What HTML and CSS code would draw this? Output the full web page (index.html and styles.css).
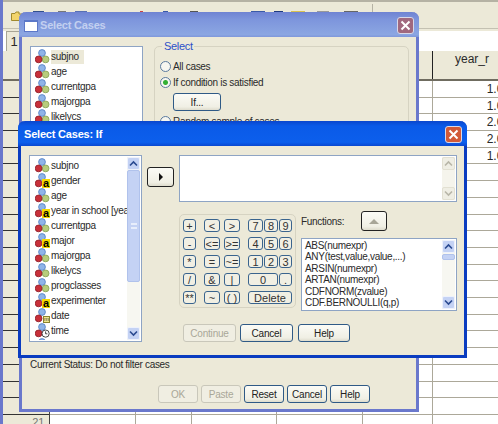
FILE: index.html
```html
<!DOCTYPE html>
<html>
<head>
<meta charset="UTF-8">
<title>Select Cases</title>
<link rel="stylesheet" href="styles.css">
</head>
<body>

<svg class="defs" width="0" height="0">
	<symbol id="v-base" viewBox="0 0 15 15">
		<circle cx="7" cy="4" r="3.4" fill="#8fb4e8" stroke="#4f7fc4" stroke-width="0.8"/>
	</symbol>
	<symbol id="v-num" viewBox="0 0 15 15">
		<circle cx="7" cy="4" r="3.4" fill="#8fb4e8" stroke="#4f7fc4" stroke-width="0.8"/>
		<circle cx="10.6" cy="10.4" r="3.4" fill="#b7cc7c" stroke="#84a050" stroke-width="0.8"/>
		<circle cx="3.6" cy="10.4" r="3.4" fill="#c8303a" stroke="#8c1c26" stroke-width="0.8"/>
	</symbol>
	<symbol id="v-two" viewBox="0 0 15 15">
		<circle cx="7" cy="4" r="3.4" fill="#8fb4e8" stroke="#4f7fc4" stroke-width="0.8"/>
		<circle cx="3.6" cy="10.4" r="3.4" fill="#c8303a" stroke="#8c1c26" stroke-width="0.8"/>
	</symbol>
	<symbol id="v-time" viewBox="0 0 15 15">
		<circle cx="7" cy="4" r="3.4" fill="#8fb4e8" stroke="#4f7fc4" stroke-width="0.8"/>
		<circle cx="3.6" cy="10.4" r="3.4" fill="#c8303a" stroke="#8c1c26" stroke-width="0.8"/>
		<circle cx="10.6" cy="10.6" r="3.6" fill="#fff" stroke="#333" stroke-width="0.9"/>
		<path d="M10.6 8.4V10.8H12.4" fill="none" stroke="#333" stroke-width="0.9"/>
	</symbol>
	<symbol id="chev-up" viewBox="0 0 9 7">
		<path d="M1 5.5L4.5 2L8 5.5" fill="none" stroke="currentColor" stroke-width="1.6"/>
	</symbol>
	<symbol id="chev-down" viewBox="0 0 9 7">
		<path d="M1 1.5L4.5 5L8 1.5" fill="none" stroke="currentColor" stroke-width="1.6"/>
	</symbol>
	<symbol id="close-x" viewBox="0 0 11 11">
		<path d="M1.5 1.5L9.5 9.5M9.5 1.5L1.5 9.5" fill="none" stroke="#fff" stroke-width="2"/>
	</symbol>
</svg>

<!-- data editor behind the dialogs -->
<div class="editor">
	<div class="toolbar">
		<svg class="folder" width="12" height="10" viewBox="0 0 12 10"><path d="M0.5 2.5H4L5 1H8V3H11.5L9.5 9.5H0.5Z" fill="#f2d46c" stroke="#a08a30"/></svg>
		<span class="tool tool-a"></span>
		<span class="tool tool-b"></span>
		<span class="tool tool-c"></span>
		<span class="tool tool-d"></span>
		<span class="tool tool-e"></span>
		<span class="tool tool-f"></span>
		<span class="tool tool-g"></span>
		<span class="tool tool-h"></span>
		<span class="tool tool-i"></span>
		<span class="tool tool-j"></span>
		<span class="tool tool-k"></span>
		<span class="tool-sep"></span>
	</div>
	<div class="refbar"><span class="refbox">1</span></div>
	<div class="headrow">
		<div class="head-blank"></div>
		<div class="head-col">year_r</div>
	</div>
	<div class="sheet">
		<div class="rowhead"><span>21</span></div>
		<div class="col col-a"></div>
		<div class="col col-b"></div>
		<div class="col col-c"></div>
		<div class="col col-d"></div>
		<div class="col col-e"></div>
		<div class="col col-year">
			<div class="val">1.00</div>
			<div class="val">1.00</div>
			<div class="val">2.00</div>
			<div class="val">2.00</div>
			<div class="val">1.00</div>
		</div>
	</div>
</div>

<!-- Select Cases -->
<div class="win win-back">
	<div class="title">
		<span class="title-icon"></span>
		<span class="title-text">Select Cases</span>
		<span class="close"><svg width="11" height="11"><use href="#close-x"/></svg></span>
	</div>
	<div class="client">
		<div class="back-top">
			<div class="list back-list">
				<div class="rows">
					<div class="row"><span class="var"><svg><use href="#v-num"/></svg></span><span class="sel">subjno</span></div>
					<div class="row"><span class="var"><svg><use href="#v-num"/></svg></span><span>age</span></div>
					<div class="row"><span class="var"><svg><use href="#v-num"/></svg></span><span>currentgpa</span></div>
					<div class="row"><span class="var"><svg><use href="#v-num"/></svg></span><span>majorgpa</span></div>
					<div class="row"><span class="var"><svg><use href="#v-num"/></svg></span><span>likelycs</span></div>
				</div>
			</div>
			<div class="group">
				<div class="legend">Select</div>
				<div class="radio-row"><span class="radio"></span>All cases</div>
				<div class="radio-row"><span class="radio on"></span>If condition is satisfied</div>
				<button class="btn btn-if" type="button">If...</button>
				<div class="radio-row"><span class="radio"></span>Random sample of cases</div>
			</div>
		</div>
		<div class="status">Current Status: Do not filter cases</div>
		<div class="back-btns">
			<button class="btn btn-b off" type="button">OK</button>
			<button class="btn btn-b off" type="button">Paste</button>
			<button class="btn btn-b" type="button">Reset</button>
			<button class="btn btn-b" type="button">Cancel</button>
			<button class="btn btn-b" type="button">Help</button>
		</div>
	</div>
</div>

<!-- Select Cases: If -->
<div class="win win-front">
	<div class="title">
		<span class="title-text">Select Cases: If</span>
		<span class="close"><svg width="11" height="11"><use href="#close-x"/></svg></span>
	</div>
	<div class="client if-body">
		<div class="list var-list">
			<div class="rows">
				<div class="row"><span class="var"><svg><use href="#v-num"/></svg></span><span>subjno</span></div>
				<div class="row"><span class="var"><svg><use href="#v-two"/></svg><b class="badge">a</b></span><span>gender</span></div>
				<div class="row"><span class="var"><svg><use href="#v-num"/></svg></span><span>age</span></div>
				<div class="row"><span class="var"><svg><use href="#v-two"/></svg><b class="badge">a</b></span><span>year in school [yea</span></div>
				<div class="row"><span class="var"><svg><use href="#v-num"/></svg></span><span>currentgpa</span></div>
				<div class="row"><span class="var"><svg><use href="#v-two"/></svg><b class="badge">a</b></span><span>major</span></div>
				<div class="row"><span class="var"><svg><use href="#v-num"/></svg></span><span>majorgpa</span></div>
				<div class="row"><span class="var"><svg><use href="#v-num"/></svg></span><span>likelycs</span></div>
				<div class="row"><span class="var"><svg><use href="#v-num"/></svg></span><span>progclasses</span></div>
				<div class="row"><span class="var"><svg><use href="#v-two"/></svg><b class="badge">a</b></span><span>experimenter</span></div>
				<div class="row"><span class="var"><svg><use href="#v-two"/></svg><b class="badge badge-date">m</b></span><span>date</span></div>
				<div class="row"><span class="var"><svg><use href="#v-time"/></svg></span><span>time</span></div>
				<div class="row"><span class="var"><svg><use href="#v-base"/></svg></span></div>
			</div>
			<div class="sb sb-var">
				<span class="sb-btn"><svg width="9" height="7"><use href="#chev-up"/></svg></span>
				<span class="sb-thumb thumb-var"><i></i></span>
				<span class="sb-gap"></span>
				<span class="sb-btn"><svg width="9" height="7"><use href="#chev-down"/></svg></span>
			</div>
		</div>
		<button class="btn btn-arrow" type="button"><span class="tri-right"></span></button>
		<div class="if-right">
			<div class="list expr">
				<div class="rows"></div>
				<div class="sb sb-off">
					<span class="sb-btn"><svg width="9" height="7"><use href="#chev-up"/></svg></span>
					<span class="sb-gap"></span>
					<span class="sb-btn"><svg width="9" height="7"><use href="#chev-down"/></svg></span>
				</div>
			</div>
			<div class="if-mid">
				<div class="keypad">
					<div class="key-row">
						<button class="key k13" type="button">+</button>
						<button class="key k16 ml8" type="button">&lt;</button>
						<button class="key k16 ml4" type="button">&gt;</button>
						<button class="key k15 ml8" type="button">7</button>
						<button class="key k14 ml1" type="button">8</button>
						<button class="key k13 ml1" type="button">9</button>
					</div>
					<div class="key-row">
						<button class="key k13" type="button">-</button>
						<button class="key k16 ml8" type="button">&lt;=</button>
						<button class="key k16 ml4" type="button">&gt;=</button>
						<button class="key k15 ml8" type="button">4</button>
						<button class="key k14 ml1" type="button">5</button>
						<button class="key k13 ml1" type="button">6</button>
					</div>
					<div class="key-row">
						<button class="key k13" type="button">*</button>
						<button class="key k16 ml8" type="button">=</button>
						<button class="key k16 ml4" type="button">~=</button>
						<button class="key k15 ml8" type="button">1</button>
						<button class="key k14 ml1" type="button">2</button>
						<button class="key k13 ml1" type="button">3</button>
					</div>
					<div class="key-row">
						<button class="key k13" type="button">/</button>
						<button class="key k16 ml8" type="button">&amp;</button>
						<button class="key k16 ml4" type="button">|</button>
						<button class="key k30 ml8" type="button">0</button>
						<button class="key k13 ml1" type="button">.</button>
					</div>
					<div class="key-row">
						<button class="key k13" type="button">**</button>
						<button class="key k16 ml8" type="button">~</button>
						<button class="key k16 ml4" type="button">( )</button>
						<button class="key k44 ml8" type="button">Delete</button>
					</div>
				</div>
				<div class="func">
					<div class="func-head">
						<span class="func-label">Functions:</span>
						<button class="btn btn-func" type="button"><span class="tri-up"></span></button>
					</div>
					<div class="list func-list">
						<div class="rows">
							<div class="fn">ABS(numexpr)</div>
							<div class="fn">ANY(test,value,value,...)</div>
							<div class="fn">ARSIN(numexpr)</div>
							<div class="fn">ARTAN(numexpr)</div>
							<div class="fn">CDFNORM(zvalue)</div>
							<div class="fn">CDF.BERNOULLI(q,p)</div>
						</div>
						<div class="sb sb-func">
							<span class="sb-btn"><svg width="9" height="7"><use href="#chev-up"/></svg></span>
							<span class="sb-thumb thumb-func"></span>
							<span class="sb-gap"></span>
							<span class="sb-btn"><svg width="9" height="7"><use href="#chev-down"/></svg></span>
						</div>
					</div>
				</div>
			</div>
			<div class="if-btns">
				<button class="btn btn-c off" type="button">Continue</button>
				<button class="btn btn-c" type="button">Cancel</button>
				<button class="btn btn-c help" type="button">Help</button>
			</div>
		</div>
	</div>
</div>

</body>
</html>
```

FILE: styles.css
```css
html, body { margin: 0; padding: 0; }
body
{
	width: 498px;
	height: 424px;
	overflow: hidden;
	position: relative;
	font-family: "Liberation Sans", Arial, sans-serif;
	font-size: 10px;
	letter-spacing: -0.3px;
	color: #2a2a2a;
	background: #fff;
}
.defs { display: block; height: 0; }

/* ---- data editor ---- */
.editor
{
	width: 498px;
	height: 424px;
	display: flex;
	flex-direction: column;
	border-left: 3px solid #6a78cc;
	box-sizing: border-box;
}
.toolbar
{
	height: 29px;
	box-sizing: border-box;
	border-top: 2px solid #b5b2a4;
	border-bottom: 1px solid #c4c1b2;
	background: #ece9d8;
	display: flex;
	align-items: flex-start;
	padding: 9px 0 0 8px;
}
.folder { flex: none; }
.tool { flex: none; height: 12px; background: #33508c; }
.tool-a { width: 11px; margin-left: 10px; }
.tool-b { width: 8px; margin-left: 14px; background: #777; }
.tool-c { width: 12px; margin-left: 9px; background: #5870b4; }
.tool-d { width: 3px; margin-left: 53px; background: #c44; }
.tool-e { width: 5px; margin-left: 20px; background: #3b5aa8; }
.tool-f { width: 8px; margin-left: 22px; background: #555; }
.tool-g { width: 14px; margin-left: 53px; background: #3b5aa8; }
.tool-h { width: 9px; margin-left: 9px; background: #1f3a80; }
.tool-i { width: 14px; margin-left: 8px; background: #d8c050; }
.tool-j { width: 12px; margin-left: 12px; background: #999; }
.tool-k { width: 14px; margin-left: 15px; background: #666; }
.tool-sep { flex: none; width: 1px; height: 24px; margin: -7px 0 0 14px; background: #b5b2a4; }

.refbar
{
	height: 22px;
	box-sizing: border-box;
	background: #fff;
	border-top: 2px solid #ece9d8;
	padding: 0;
	display: flex;
}
.refbox
{
	width: 14px;
	height: 19px;
	margin-left: 3px;
	border: 1px solid #a8a595;
	border-right: 0;
	background: #ece9d8;
	line-height: 19px;
	font-size: 13px;
	text-align: center;
}
.headrow
{
	height: 30px;
	box-sizing: border-box;
	background: #ece9d8;
	border-bottom: 2px solid #6f6c60;
	display: flex;
}
.head-blank { width: 429px; border-right: 1px solid #222; flex: none; }
.head-col { width: 78px; flex: none; text-align: center; padding-top: 1px; font-size: 12px; letter-spacing: 0; }

.sheet
{
	flex: 1;
	display: flex;
	overflow: hidden;
	background: repeating-linear-gradient(to bottom, #fff 0, #fff 15.7px, #aca899 15.7px, #aca899 16.7px);
}
.rowhead
{
	width: 47px;
	flex: none;
	box-sizing: border-box;
	border-right: 1px solid #444;
	background: repeating-linear-gradient(to bottom, #ece9d8 0, #ece9d8 15.7px, #333 15.7px, #333 16.7px);
	display: flex;
	align-items: flex-end;
	justify-content: flex-end;
	padding-right: 5px;
	color: #777;
	font-size: 11px;
}
.rowhead span { margin-bottom: -4px; }
.col { flex: none; box-sizing: border-box; border-right: 1px solid #aca899; }
.col-a { width: 86px; }
.col-b { width: 56px; }
.col-c { width: 85px; }
.col-d { width: 86px; }
.col-e { width: 70px; }
.col-year { width: 78px; border-right: 0; padding-right: 1px; }
.val { height: 16.7px; line-height: 16px; text-align: right; font-size: 12px; letter-spacing: 0; }

/* ---- dialogs ---- */
.win
{
	position: absolute;
	box-sizing: border-box;
	border-width: 0 3px 3px 3px;
	border-style: solid;
	border-radius: 7px 7px 0 0;
	background: #ece9d8;
}
.win-back { left: 19px; top: 12px; width: 400px; height: 400px; border-color: #6a78cc; }
.win-front { left: 18px; top: 121px; width: 449px; height: 237px; border-color: #0a3cc0; }

.title
{
	height: 25px;
	margin: 0 -3px;
	padding: 0 5px 0 5px;
	border-radius: 7px 7px 0 0;
	display: flex;
	align-items: center;
	font-size: 11px;
	font-weight: bold;
	letter-spacing: -0.2px;
}
.win-back .title { background: linear-gradient(to bottom, #6f83d2, #7d95dc 30%, #8ba6e2 90%, #7f97da); color: #c3d0f0; }
.win-front .title { background: linear-gradient(to bottom, #0a46cc, #0a5ae8 20%, #0c5fec 85%, #0a48d0); color: #fff; padding-left: 6px; }
.title-icon
{
	width: 12px;
	height: 9px;
	margin: 2px 2px 0 0;
	background: #fff;
	border: 1px solid #5c78c8;
	border-top-width: 2px;
	flex: none;
}
.title-text { flex: 1; padding-top: 1px; }
.close
{
	box-sizing: border-box;
	width: 17px;
	height: 17px;
	flex: none;
	border: 1px solid #d8d8e8;
	border-radius: 3px;
	display: flex;
	align-items: center;
	justify-content: center;
	margin-top: 1px;
}
.win-back .close { background: #a0687e; }
.win-front .close { background: #d25a38; }

.client { height: calc(100% - 25px); box-sizing: border-box; }

.list
{
	box-sizing: border-box;
	border: 1px solid #8ea4c4;
	background: #fff;
	display: flex;
	overflow: hidden;
}
.rows { flex: 1; min-width: 0; padding-top: 2px; overflow: hidden; }
.row { height: 15px; display: flex; align-items: center; white-space: nowrap; padding-left: 4px; }
.var { width: 15px; height: 15px; flex: none; margin-right: 1px; position: relative; }
.var svg { width: 15px; height: 15px; display: block; }
.badge
{
	position: absolute;
	right: 0;
	bottom: 0;
	width: 8px;
	height: 9px;
	background: #f5d800;
	color: #000;
	font-size: 11px;
	line-height: 8px;
	text-align: center;
	letter-spacing: 0;
}
.badge-date
{
	width: 7px;
	height: 7px;
	box-sizing: border-box;
	border: 1px solid #8a8430;
	background: #f0e68c;
	color: #444;
	font-size: 6px;
	font-weight: normal;
	line-height: 5px;
}
.sel { background: #ece9d8; padding: 1px 5px 2px 0; }

.btn
{
	box-sizing: border-box;
	border: 1px solid #2f5a86;
	border-radius: 3px;
	background: linear-gradient(to bottom, #fbfbf6, #f0efe4 80%, #dedccd);
	font-family: inherit;
	font-size: 10px;
	letter-spacing: -0.2px;
	color: #222;
	padding: 0;
}
.btn.off { border-color: #c9c7ba; color: #a9a798; background: #f0eee2; }

/* back dialog */
.win-back .client { padding: 9px 7px 0 8px; }
.back-top { display: flex; height: 294px; }
.back-list { width: 113px; height: 294px; flex: none; }
.group
{
	width: 255px;
	margin-left: 11px;
	flex: none;
	box-sizing: border-box;
	border: 1px solid #d6d3c2;
	border-radius: 5px;
	padding-left: 5px;
}
.legend
{
	margin: -7px 0 3px 2px;
	width: 30px;
	padding-left: 2px;
	background: #ece9d8;
	color: #2b50c8;
	font-size: 11px;
	height: 15px;
}
.radio-row { height: 16px; display: flex; align-items: center; }
.radio
{
	width: 9px;
	height: 9px;
	border: 1px solid #5b7a9e;
	border-radius: 50%;
	background: #f6f6f0;
	margin-right: 2px;
	flex: none;
}
.radio.on { background: radial-gradient(circle, #33b033 0, #33b033 2px, #f6f6f0 3px); }
.btn-if { display: block; width: 48px; height: 18px; margin: 3px 0 2px 13px; }

.status { margin-top: 18px; line-height: 13px; }
.back-btns { display: flex; gap: 3px; margin: 14px 0 0 128px; }
.btn-b { width: 40px; height: 18px; }

/* front dialog */
.if-body { display: flex; padding: 9px 0 0 8px; align-items: flex-start; }
.var-list { width: 113px; height: 187px; flex: none; padding: 1px; }
.var-list .rows { padding-top: 1px; }
.btn-arrow
{
	width: 27px;
	height: 20px;
	margin: 12px 0 0 5px;
	flex: none;
	border-color: #222;
	display: flex;
	align-items: center;
	justify-content: center;
}
.tri-right { border-left: 4px solid #111; border-top: 4px solid transparent; border-bottom: 4px solid transparent; }
.tri-up { border-bottom: 5px solid #a8a698; border-left: 5px solid transparent; border-right: 5px solid transparent; }
.if-right { width: 278px; margin-left: 5px; flex: none; }
.expr { height: 47px; padding: 1px; }
.if-mid { display: flex; margin-top: 9px; align-items: flex-start; }
.keypad
{
	box-sizing: border-box;
	width: 117px;
	height: 94px;
	margin: 3px 0 0 0;
	padding: 4px 0 0 3px;
	border: 1px solid #d6d3c2;
	border-radius: 5px;
}
.key-row { display: flex; height: 13px; margin-bottom: 5px; }
.key-row:nth-child(4) { margin-top: 1px; }
.key-row:nth-child(5) { margin-top: 1px; }
.key
{
	box-sizing: border-box;
	height: 13px;
	padding: 0;
	border: 1px solid #3a648e;
	border-radius: 3px;
	background: #f1efe3;
	font-family: inherit;
	font-size: 11px;
	line-height: 10px;
	letter-spacing: 0;
	color: #333;
	flex: none;
}
.k13 { width: 13px; }
.k14 { width: 14px; }
.k15 { width: 15px; }
.k16 { width: 16px; }
.k30 { width: 30px; }
.k44 { width: 44px; }
.ml1 { margin-left: 1px; }
.ml4 { margin-left: 4px; }
.ml8 { margin-left: 8px; }

.func { width: 156px; margin-left: 5px; flex: none; }
.func-head { display: flex; align-items: center; height: 20px; margin-bottom: 7px; }
.func-label { width: 60px; flex: none; }
.btn-func
{
	width: 26px;
	height: 20px;
	border-color: #222;
	display: flex;
	align-items: center;
	justify-content: center;
}
.func-list { height: 73px; padding: 1px; }
.func-list .rows { padding: 0 0 0 2px; }
.fn { height: 11.4px; line-height: 11.4px; white-space: nowrap; }

.if-btns { display: flex; gap: 4px; margin: 13px 0 0 4px; }
.btn-c { width: 53px; height: 18px; }
.btn-c.help { margin-left: 1px; width: 52px; }

/* scrollbars */
.sb { width: 13px; flex: none; display: flex; flex-direction: column; background: #f7f7f1; color: #2a4a90; }
.sb-btn
{
	height: 13px;
	flex: none;
	background: #c4d2f4;
	border: 1px solid #eef2fc;
	box-sizing: border-box;
	border-radius: 2px;
	display: flex;
	align-items: center;
	justify-content: center;
}
.sb-gap { flex: 1; }
.sb-thumb
{
	flex: none;
	box-sizing: border-box;
	background: #c4d2f4;
	border: 1px solid #b0c2ec;
	border-radius: 2px;
}
.thumb-var { height: 112px; display: flex; align-items: center; justify-content: center; }
.thumb-var i { width: 6px; height: 6px; border-top: 2px solid #e8eefb; border-bottom: 2px solid #e8eefb; box-sizing: border-box; }
.thumb-func { height: 6px; margin-top: 1px; }
.sb-off { color: #b8b6a8; background: #f5f4ec; }
.sb-off .sb-btn { background: #efeee4; border-color: #e2e0d2; }
```
